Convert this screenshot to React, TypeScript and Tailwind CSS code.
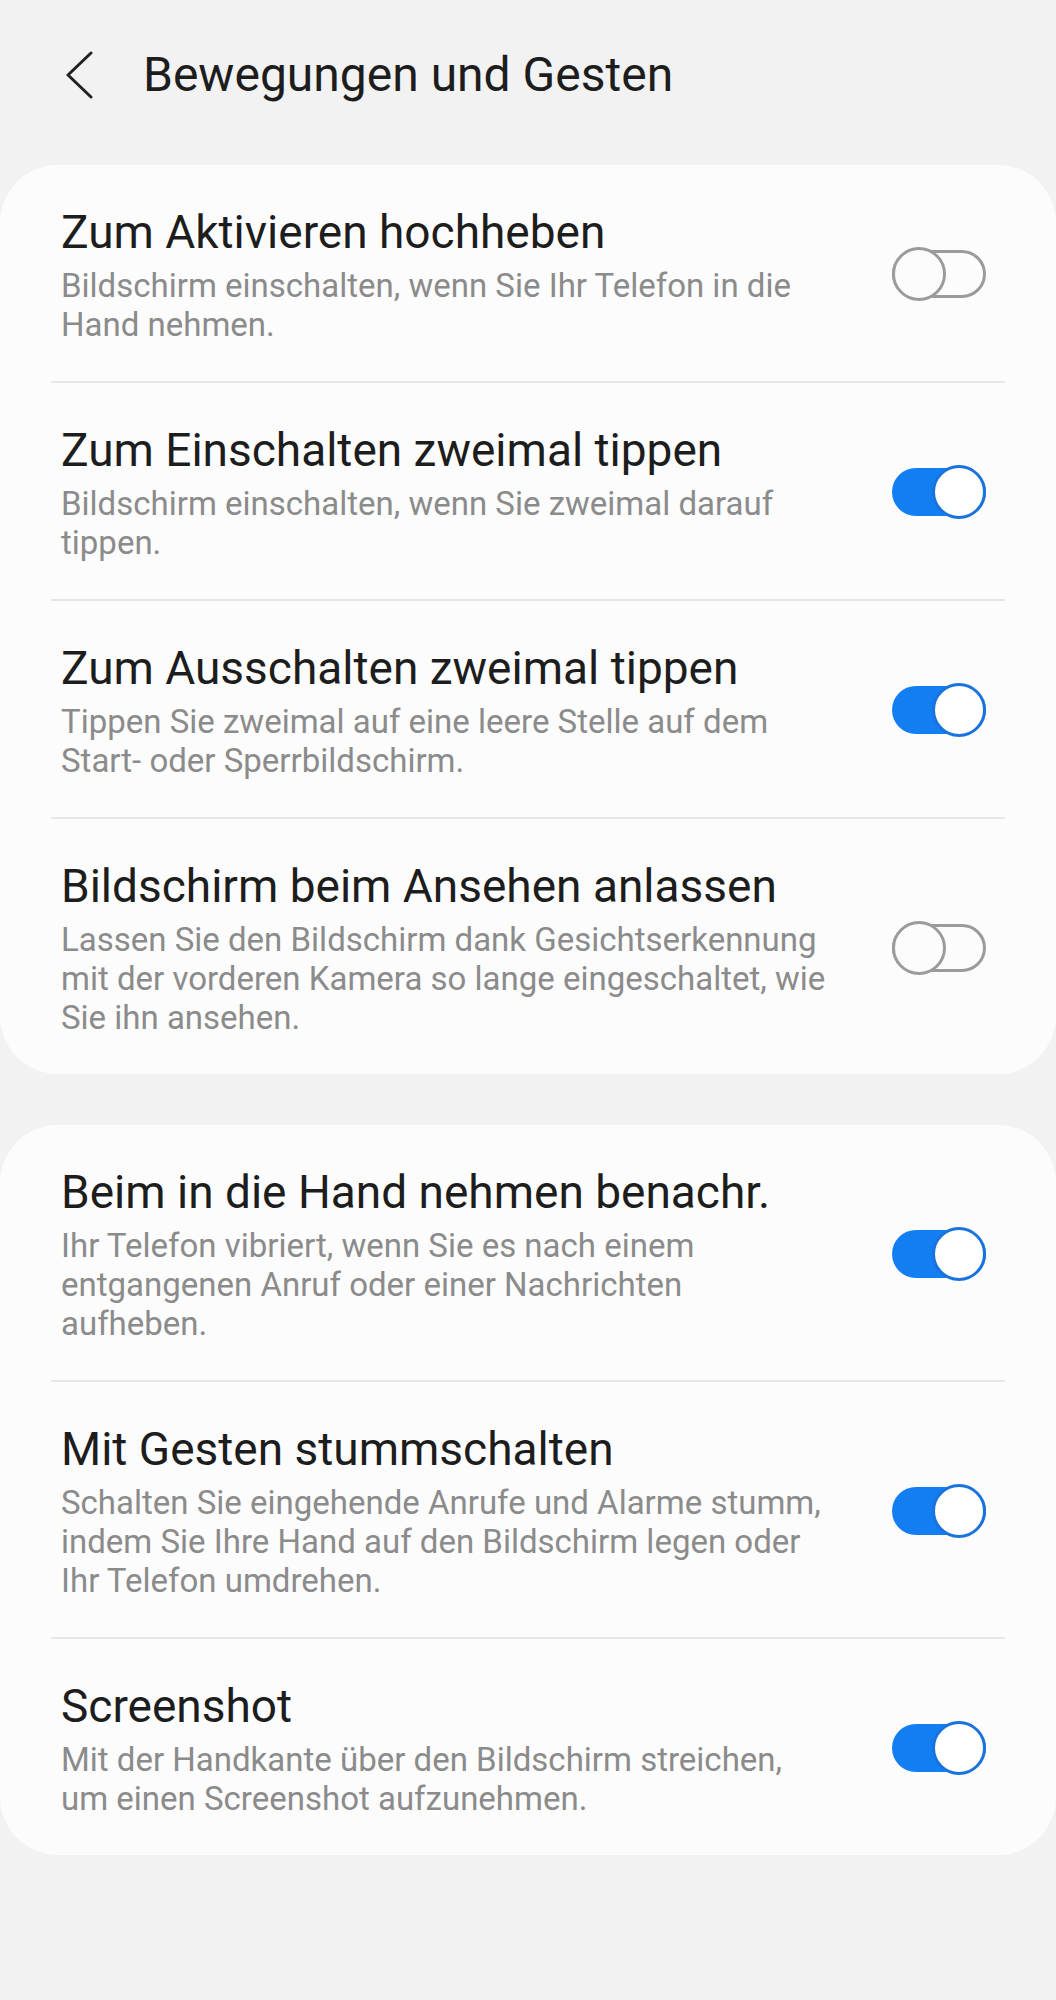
import React from "react"

type Item = {
    title: string
    lines: string[]
    on: boolean
}

const group1: Item[] = [
    {
        title: "Zum Aktivieren hochheben",
        lines: ["Bildschirm einschalten, wenn Sie Ihr Telefon in die", "Hand nehmen."],
        on: false,
    },
    {
        title: "Zum Einschalten zweimal tippen",
        lines: ["Bildschirm einschalten, wenn Sie zweimal darauf", "tippen."],
        on: true,
    },
    {
        title: "Zum Ausschalten zweimal tippen",
        lines: ["Tippen Sie zweimal auf eine leere Stelle auf dem", "Start- oder Sperrbildschirm."],
        on: true,
    },
    {
        title: "Bildschirm beim Ansehen anlassen",
        lines: [
            "Lassen Sie den Bildschirm dank Gesichtserkennung",
            "mit der vorderen Kamera so lange eingeschaltet, wie",
            "Sie ihn ansehen.",
        ],
        on: false,
    },
]

const group2: Item[] = [
    {
        title: "Beim in die Hand nehmen benachr.",
        lines: [
            "Ihr Telefon vibriert, wenn Sie es nach einem",
            "entgangenen Anruf oder einer Nachrichten",
            "aufheben.",
        ],
        on: true,
    },
    {
        title: "Mit Gesten stummschalten",
        lines: [
            "Schalten Sie eingehende Anrufe und Alarme stumm,",
            "indem Sie Ihre Hand auf den Bildschirm legen oder",
            "Ihr Telefon umdrehen.",
        ],
        on: true,
    },
    {
        title: "Screenshot",
        lines: ["Mit der Handkante über den Bildschirm streichen,", "um einen Screenshot aufzunehmen."],
        on: true,
    },
]

function Toggle({ on }: { on: boolean }) {
    if (on) {
        return (
            <div className="relative w-[94px] h-[54px] flex items-center">
                <div className="w-[94px] h-[48px] rounded-full bg-[#137ef1]" />
                <div className="absolute right-0 top-0 w-[54px] h-[54px] rounded-full bg-white border-[3px] border-[#1a73dd]" />
            </div>
        )
    }
    return (
        <div className="relative w-[94px] h-[54px] flex items-center">
            <div className="w-[94px] h-[48px] rounded-full border-[3px] border-[#9b9b9b]" />
            <div className="absolute left-0 top-0 w-[54px] h-[54px] rounded-full bg-[#fcfcfc] border-[3px] border-[#9b9b9b]" />
        </div>
    )
}

function Row({ item }: { item: Item }) {
    return (
        <div className="flex items-center pl-[61px] pr-[70px] pt-[39px] pb-[37px]">
            <div className="flex-1 min-w-0">
                <div className="text-[46px] leading-[56px] text-[#1d1d1d] whitespace-nowrap">{item.title}</div>
                <div className="mt-[6px] text-[33px] leading-[39px] text-[#8b8b8b]">
                    {item.lines.map((l) => (
                        <div key={l} className="whitespace-nowrap">{l}</div>
                    ))}
                </div>
            </div>
            <Toggle on={item.on} />
        </div>
    )
}

function Card({ items }: { items: Item[] }) {
    return (
        <div className="bg-[#fcfcfc] rounded-[58px]">
            {items.map((item, i) => (
                <div key={item.title}>
                    {i > 0 && <div className="mx-[51px] h-[2px] bg-[#e6e6e6]" />}
                    <Row item={item} />
                </div>
            ))}
        </div>
    )
}

export default function App() {
    return (
        <div className="min-h-[2000px] bg-[#f2f2f2] font-['Roboto',sans-serif]">
            <div className="h-[150px] flex items-center">
                <div className="ml-[66px] w-[28px] h-[48px] flex items-center">
                    <svg width="28" height="48" viewBox="0 0 28 48" fill="none">
                        <polyline
                            points="25,2 2,24 25,46"
                            stroke="#222"
                            strokeWidth="3"
                            strokeLinecap="round"
                            strokeLinejoin="round"
                        />
                    </svg>
                </div>
                <h1 className="ml-[49px] text-[48px] leading-[56px] text-[#1d1d1d]">Bewegungen und Gesten</h1>
            </div>

            <div className="mt-[15px] flex flex-col gap-[51px]">
                <Card items={group1} />
                <Card items={group2} />
            </div>
        </div>
    )
}
